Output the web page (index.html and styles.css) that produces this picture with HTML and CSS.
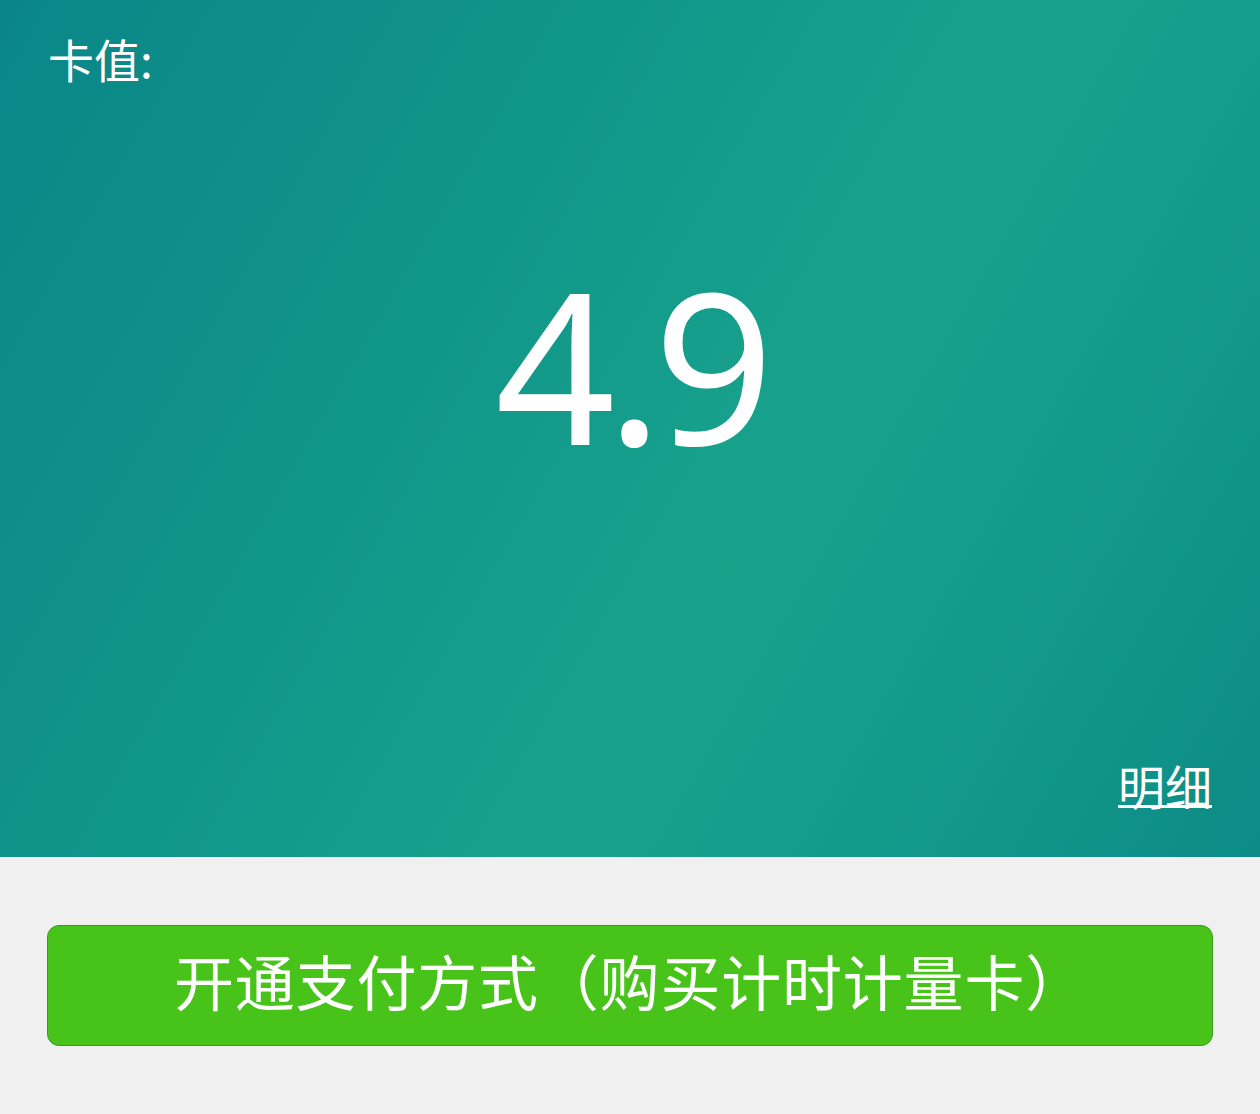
FILE: index.html
```html
<!DOCTYPE html>
<html lang="zh-CN">
<head>
<meta charset="utf-8">
<title>卡值</title>
<link rel="stylesheet" href="styles.css">
</head>
<body>
<div class="page">
  <section class="card">
    <div class="card-label">卡值:</div>
    <div class="card-value">4.9</div>
    <div class="card-footer"><a class="detail-link" href="#">明细</a></div>
  </section>
  <div class="actions">
    <button class="pay-btn" type="button">开通支付方式（购买计时计量卡）</button>
  </div>
</div>
</body>
</html>
```

FILE: styles.css
```css
html, body {
  margin: 0;
  padding: 0;
}
body {
  background: #f0f0f0;
  font-family: "Noto Sans", "Noto Sans CJK SC", sans-serif;
  width: 1260px;
  height: 1114px;
  overflow: hidden;
}
.page {
  display: flex;
  flex-direction: column;
}
.card {
  height: 857px;
  box-sizing: border-box;
  padding: 28px 48px 42px 48px;
  background: linear-gradient(120deg, #0a8688 0%, #11968a 35%, #18a28c 60%, #12978a 82%, #0b8c87 100%);
  display: flex;
  flex-direction: column;
  color: #fff;
}
.card-label {
  font-family: "Noto Sans CJK SC", sans-serif;
  font-size: 46px;
  line-height: 60px;
}
.card-value {
  margin-top: 161px;
  text-align: center;
  font-family: "Noto Sans", "Open Sans", sans-serif;
  font-weight: 400;
  font-size: 210px;
  line-height: 230px;
  letter-spacing: -9px;
}
.card-footer {
  margin-top: auto;
  display: flex;
  justify-content: flex-end;
}
.detail-link {
  font-family: "Noto Sans CJK SC", sans-serif;
  font-size: 47px;
  line-height: 60px;
  color: #fff;
  text-decoration: underline;
  text-decoration-thickness: 3px;
  text-underline-offset: 0px;
}
.actions {
  padding: 68px 47px 0 47px;
}
.pay-btn {
  display: block;
  width: 100%;
  height: 121px;
  border: 1.5px solid #3a9d1a;
  border-radius: 12px;
  background: #47c31a;
  color: #fff;
  font-family: "Noto Sans CJK SC", sans-serif;
  font-size: 60px;
  line-height: 1;
  letter-spacing: 0.8px;
  text-spacing-trim: space-all;
  padding: 0 0 12px 0;
  cursor: pointer;
}
```
